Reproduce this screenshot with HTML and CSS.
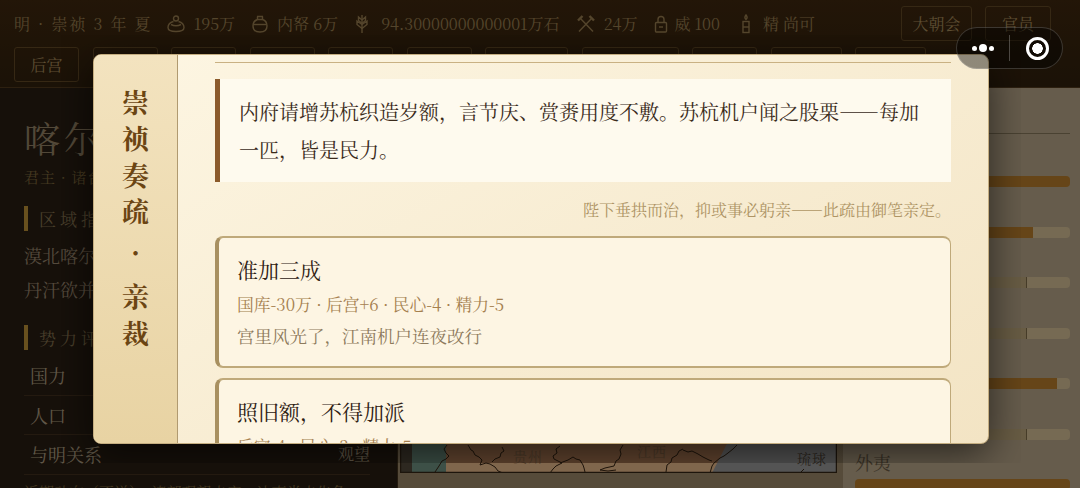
FILE: index.html
```html
<!DOCTYPE html>
<html lang="zh-CN">
<head>
    <meta charset="UTF-8">
    <meta name="viewport" content="width=device-width, initial-scale=1.0">
    <title>崇祯奏疏</title>
    <link rel="stylesheet" href="styles.css">
</head>
<body>
    <div class="page">
        <header class="topbar">
            <div class="status-row">
                <span class="era">明 · 崇祯 3 年 夏</span>
                <span class="stat">
                    <svg class="stat-icon" width="18" height="18" viewBox="0 0 18 18"><circle cx="9" cy="3.500" r="2.500"/><path d="M6.500 6.500C3 7.500 1 10 1 12.500c0 2.500 3 4 8 4s8-1.500 8-4c0-2.500-2-5-5.500-6"/><path d="M4 9.500c3 1.500 7 1.500 10 0"/></svg>
                    195万
                </span>
                <span class="stat">
                    <svg class="stat-icon" width="16" height="18" viewBox="0 0 16 18"><path d="M5 1.500h6M5.500 1.500v3M10.500 1.500v3"/><path d="M5.500 4.500C2.500 5.500 1 8 1 11c0 4 2.500 6 7 6s7-2 7-6c0-3-1.500-5.500-4.500-6.500z"/><path d="M1.500 9.500h13"/></svg>
                    内帑 6万
                </span>
                <span class="stat stat-grain">
                    <svg class="stat-icon" width="14" height="20" viewBox="0 0 14 20"><path d="M7 1v18"/><path d="M7 6 3.500 3v3.500L7 9.500M7 6l3.500-3v3.500L7 9.500"/><path d="M7 10.500 2 7v3.500l5 4M7 10.500 12 7v3.500l-5 4"/></svg>
                    94.30000000000001万石
                </span>
                <span class="stat">
                    <svg class="stat-icon" width="18" height="18" viewBox="0 0 18 18"><path d="M3 3l13 13.500M15 3 2 16.500"/><path d="M1 5.500 5.500 1M17 5.500 12.500 1" class="thick"/></svg>
                    24万
                </span>
                <span class="stat stat-power">
                    <svg class="stat-icon" width="14" height="18" viewBox="0 0 14 18"><path d="M4 8V4.500a3 3 0 0 1 6 0V8"/><rect x="1.500" y="7.500" width="11" height="9.500" rx="1"/><path d="M5 12h4"/></svg>
                    威 100
                </span>
                <span class="stat stat-wide">
                    <svg class="stat-icon" width="10" height="20" viewBox="0 0 10 20"><path d="M5 1c1.500 1.800 1.500 3.200 0 4.500C3.500 4.200 3.500 2.800 5 1z"/><rect x="2" y="7.500" width="6" height="11"/><path d="M2 13h6"/></svg>
                    精 尚可
                </span>
                <div class="top-actions">
                    <button class="top-btn top-btn-wide">大朝会</button>
                    <button class="top-btn">官员</button>
                </div>
            </div>
            <nav class="tabs">
                <button class="tab">后宫</button>
                <button class="tab"></button>
                <button class="tab"></button>
                <button class="tab"></button>
                <button class="tab"></button>
                <button class="tab"></button>
                <button class="tab tab-three"></button>
                <button class="tab tab-long"></button>
                <button class="tab"></button>
                <button class="tab tab-mid"></button>
                <button class="tab tab-mid"></button>
            </nav>
        </header>

        <main class="main">
            <section class="region-panel">
                <h2 class="region-name">喀尔喀</h2>
                <p class="region-sub">君主 · 诸台吉</p>
                <h3 class="section-title">区域指标</h3>
                <p class="region-text">漠北喀尔喀诸部<br>丹汗欲并诸部</p>
                <h3 class="section-title">势力评估</h3>
                <div class="info-row"><span>国力</span></div>
                <div class="info-row"><span>人口</span></div>
                <div class="info-row"><span>与明关系</span><span class="info-value">观望</span></div>
                <p class="region-note">近期动向（不详）　诸部观望未定，边事尚未告急</p>
            </section>

            <section class="map-panel">
                <svg class="map" width="437" height="381" viewBox="0 0 437 381">
                    <rect width="437" height="381" fill="#c88c60"/>
                    <rect y="371" width="437" height="10" fill="#ffcc99"/>
                    <rect x="0" width="12" height="381" fill="#5a5040"/>
                    <rect x="12" width="34" height="381" fill="#7aa08e"/>
                    <path d="M333 340 L312 381 H437 V340z" fill="#a8a8a8"/>
                    <g class="map-lines">
                        <path d="M47 353l-3 4 2 4 3 3-3 3-4 2-3 5-4 6"/>
                        <path d="M68 353l3 5 2 1 2 4 4 2 3 3-2 5 6-2 4 1 5 3 3 4 5 2"/>
                        <path d="M92 370l3-3 5-2 1-4 3-2-2-4"/>
                        <path d="M160 354l-4 3 1 4-4 3 1 3 4 2 4 2-6 3-3 3-3 4"/>
                        <path d="M160 371l8-3 5-3 3 2 4 1 3 5 1 3 1 4"/>
                        <path d="M223 353l-3 5 1 4-2 5-3 2-2 5-9 2-5 2 8 1 8-1"/>
                        <path d="M283 357l-4 2-2 4-5 3-1 4-4 3-1 7"/>
                        <path d="M283 358l5 2 4-1 6 3 5 3 6 3 3 1"/>
                        <path d="M337 353l-4 4-5 4-4 3-4 2-6 5-2 3-2 7"/>
                        <path d="M401 380l3-3"/>
                    </g>
                    <text x="113" y="370" class="map-label">贵州</text>
                    <text x="237" y="365" class="map-label">江西</text>
                    <text x="397" y="372" class="map-label map-label-dark">琉球</text>
                    <rect x="0.500" y="0.500" width="436" height="380" class="map-frame"/>
                </svg>
            </section>

            <aside class="court-panel">
                <div class="court-head"></div>
                <div class="court-row"><div class="bar"><div class="bar-fill" style="width: 100%"></div></div></div>
                <div class="court-row"><div class="bar"><div class="bar-fill" style="width: 83%"></div></div></div>
                <div class="court-row"><div class="bar"><div class="bar-soft" style="width: 80%"></div></div></div>
                <div class="court-row"><div class="bar"><div class="bar-soft" style="width: 80%"></div></div></div>
                <div class="court-row"><div class="bar"><div class="bar-fill" style="width: 94%"></div></div></div>
                <div class="court-row"><div class="bar"><div class="bar-soft" style="width: 80%"></div></div></div>
                <div class="court-row"><span class="court-label">外夷</span><div class="bar"><div class="bar-fill" style="width: 100%"></div></div></div>
            </aside>
        </main>
    </div>

    <div class="overlay">
        <div class="dialog-shade">
            <div class="dialog">
                <div class="spine">崇祯奏疏<span class="spine-dot">·</span>亲裁</div>
                <div class="memo">
                    <div class="memo-rule"></div>
                    <blockquote class="memo-quote">内府请增苏杭织造岁额，言节庆、赏赉用度不敷。苏杭机户闻之股栗——每加一匹，皆是民力。</blockquote>
                    <p class="memo-hint">陛下垂拱而治，抑或事必躬亲——此疏由御笔亲定。</p>
                    <div class="choice">
                        <div class="choice-title">准加三成</div>
                        <div class="choice-effect">国库-30万 · 后宫+6 · 民心-4 · 精力-5</div>
                        <div class="choice-note">宫里风光了，江南机户连夜改行</div>
                    </div>
                    <div class="choice">
                        <div class="choice-title">照旧额，不得加派</div>
                        <div class="choice-effect">后宫-4 · 民心-3 · 精力-5</div>
                    </div>
                </div>
            </div>
        </div>
    </div>

    <div class="capsule">
        <span class="capsule-dots"><i></i><i class="big"></i><i></i></span>
        <span class="capsule-line"></span>
        <span class="capsule-target"></span>
    </div>
</body>
</html>
```

FILE: styles.css
```css
* {
    box-sizing: border-box;
}
html, body {
    margin: 0;
    height: 100%;
    overflow: hidden;
}
body {
    font-family: "Noto Serif CJK SC", "Liberation Serif", "Noto Sans CJK SC", serif;
    position: relative;
    width: 1080px;
    height: 488px;
    background: #2c2014;
}
.page {
    display: flex;
    flex-direction: column;
    height: 488px;
}

/* top bar */
.topbar {
    height: 88px;
    padding: 6px 14px 0;
    background: linear-gradient(180deg, #462c10, #36240e);
    border-bottom: 1px solid #5a4020;
    flex-shrink: 0;
}
.status-row {
    display: flex;
    align-items: center;
    height: 35px;
    color: #a88a58;
    font-size: 16px;
}
.era {
    letter-spacing: 2px;
    margin-right: 14px;
    white-space: nowrap;
}
.stat {
    display: flex;
    align-items: center;
    gap: 9px;
    margin-right: 17px;
    white-space: nowrap;
}
.stat-grain {
    gap: 12px;
}
.stat-power {
    gap: 6px;
    margin-right: 21px;
}
.stat-wide {
    gap: 12px;
}
.stat-icon {
    fill: none;
    stroke: currentColor;
    stroke-width: 1.400;
    flex-shrink: 0;
}
.stat-icon .thick {
    stroke-width: 2.400;
}
.top-actions {
    display: flex;
    gap: 13px;
    margin-left: auto;
    margin-right: 15px;
}
.top-btn, .tab {
    font-family: inherit;
    font-size: 16px;
    color: #b89a64;
    background: transparent;
    border: 1px solid #6c5028;
    border-radius: 3px;
    padding: 0;
}
.top-btn {
    width: 66px;
    height: 35px;
}
.top-btn-wide {
    width: 71px;
}
.tabs {
    display: flex;
    gap: 13.500px;
    margin-top: 6px;
}
.tab {
    width: 65px;
    height: 35px;
}
.tab-three {
    width: 83px;
}
.tab-long {
    width: 97px;
}
.tab-mid {
    width: 71px;
}

/* main columns */
.main {
    flex: 1;
    display: grid;
    grid-template-columns: 398px 445px 1fr;
    min-height: 0;
}
.region-panel {
    background: #2c2014;
    padding: 27px 27px 0 24px;
    border-right: 1px solid #4a3820;
    overflow: hidden;
}
.region-name {
    margin: 0;
    font-size: 36px;
    font-weight: 400;
    line-height: 46px;
    letter-spacing: 4px;
    color: #a49070;
}
.region-sub {
    margin: 6px 0 0;
    font-size: 15px;
    line-height: 20px;
    letter-spacing: 1px;
    color: #887040;
}
.section-title {
    margin: 19px 0 0;
    padding-left: 11px;
    font-size: 17px;
    font-weight: 400;
    line-height: 25px;
    letter-spacing: 4px;
    color: #907c56;
    border-left: 4px solid #d0a03c;
}
.region-text {
    margin: 8px 0 0;
    font-size: 18px;
    line-height: 33.500px;
    color: #a8947a;
}
.info-row {
    display: flex;
    justify-content: space-between;
    height: 39.500px;
    padding: 0 0 0 6px;
    font-size: 18px;
    line-height: 38px;
    color: #c0ae90;
    border-bottom: 1px solid #483420;
}
.section-title + .info-row {
    margin-top: 6px;
}
.info-value {
    font-size: 16px;
}
.region-note {
    margin: 6px 0 0;
    font-size: 15px;
    white-space: nowrap;
    color: #887040;
}
.map-panel {
    background: linear-gradient(180deg, #bea684, #ac9674);
    padding-top: 4px;
    overflow: hidden;
}
.map {
    display: block;
    margin-left: 2px;
}
.map-lines path {
    fill: none;
    stroke: #3c2814;
    stroke-width: 1;
}
.map-label {
    font-size: 14px;
    letter-spacing: 1px;
    fill: #9a7450;
}
.map-label-dark {
    fill: #5a4e40;
}
.map-frame {
    fill: none;
    stroke: #3a2a18;
    stroke-width: 1.500;
}
.court-panel {
    background: #ccb898;
    padding: 0 10px 0 12px;
    overflow: hidden;
}
.court-head {
    height: 46px;
    border-bottom: 1px solid #948464;
}
.court-row {
    position: relative;
    height: 50.500px;
    padding-top: 33px;
}
.court-head + .court-row {
    margin-top: 9px;
}
.court-label {
    position: absolute;
    top: 4px;
    left: 0;
    font-size: 18px;
    line-height: 24px;
    color: #74644c;
}
.bar {
    height: 11px;
    border-radius: 4px;
    background: #ecd4a6;
    overflow: hidden;
}
.bar-fill {
    height: 100%;
    background: #cc8a30;
}
.bar-soft {
    height: 100%;
    background: #d0b888;
    border-right: 1px solid #8c7850;
}

/* memorial dialog */
.overlay {
    position: absolute;
    top: 0;
    left: 0;
    width: 1080px;
    height: 488px;
    background: rgba(0, 0, 0, 0.5);
    display: flex;
    justify-content: center;
    align-items: flex-start;
    padding: 35px 0 0 2px;
}
.dialog-shade {
    padding: 19px 32px;
    overflow: hidden;
}
.dialog {
    display: flex;
    width: 896px;
    height: 390px;
    border-radius: 8px;
    border: 1px solid #c4ad80;
    background: linear-gradient(150deg, #fdf6e3, #f3e4c4);
    box-shadow: 0 10px 40px rgba(0, 0, 0, 0.6);
    overflow: hidden;
}
.spine {
    width: 84px;
    flex-shrink: 0;
    padding-top: 34px;
    background: linear-gradient(180deg, #f3e3bf, #e8d3a3);
    border-right: 1px solid #b09a70;
    writing-mode: vertical-rl;
    text-orientation: upright;
    line-height: 83px;
    font-size: 27px;
    font-weight: 700;
    letter-spacing: 9.500px;
    color: #6b4513;
}
.spine-dot {
    margin-inline: 4px 8px;
}
.memo {
    flex: 1;
    min-width: 0;
    padding: 7px 37px 0;
    overflow: hidden;
}
.memo-rule {
    border-top: 1px solid #c9b183;
}
.memo-quote {
    margin: 16px 0 0;
    padding: 14px 20px 13px 19px;
    border-left: 5px solid #8b5a2b;
    background: #fefaee;
    font-size: 20px;
    line-height: 38px;
    color: #3a2a1a;
}
.memo-hint {
    margin: 16px 0 0;
    font-size: 16px;
    line-height: 24px;
    text-align: right;
    color: #ae9464;
}
.choice {
    height: 132px;
    margin-bottom: 10px;
    padding: 16px 20px 0 18px;
    background: #fdf5e3;
    border-style: solid;
    border-color: #bfa97a;
    border-width: 2px 1px 2px 4px;
    border-left-color: #a89060;
    border-radius: 8px;
}
.memo-hint + .choice {
    margin-top: 14px;
}
.choice-title {
    font-size: 21px;
    line-height: 30px;
    color: #2e2012;
}
.choice-effect {
    margin-top: 7px;
    font-size: 16.800px;
    line-height: 26px;
    color: #a5804f;
}
.choice-note {
    margin-top: 5px;
    font-size: 17.500px;
    line-height: 28px;
    color: #8d7a5c;
}

/* capsule */
.capsule {
    position: absolute;
    top: 27px;
    left: 956px;
    width: 107px;
    height: 42px;
    border-radius: 21px;
    border: 1px solid rgba(255, 255, 255, 0.18);
    background: rgba(0, 0, 0, 0.42);
    display: flex;
    align-items: center;
    padding-left: 15px;
}
.capsule-dots {
    display: flex;
    align-items: center;
    gap: 2px;
    width: 24px;
}
.capsule-dots i {
    width: 5px;
    height: 5px;
    border-radius: 50%;
    background: #fff;
}
.capsule-dots i.big {
    width: 8px;
    height: 8px;
}
.capsule-line {
    width: 1px;
    height: 26px;
    margin-left: 13px;
    background: rgba(255, 255, 255, 0.25);
}
.capsule-target {
    width: 23px;
    height: 23px;
    margin-left: 16px;
    border-radius: 50%;
    border: 3px solid #fff;
    background: radial-gradient(circle, #fff 0 5px, transparent 5.500px);
}
```
